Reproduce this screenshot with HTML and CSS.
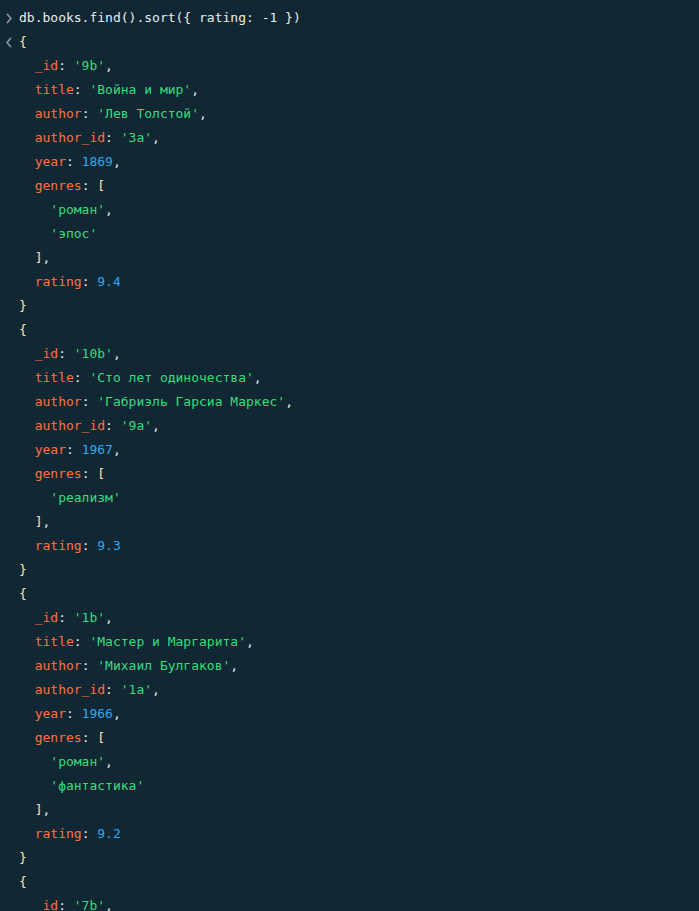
FILE: index.html
```html
<!DOCTYPE html>
<html lang="ru">
<head>
<meta charset="utf-8">
<title>mongosh</title>
<link rel="stylesheet" href="styles.css">
</head>
<body>
<div class="shell">
  <div class="entry">
    <div class="gutter"><svg class="chev" width="12" height="24" viewBox="0 0 12 24"><polyline points="7.5,8.5 11,12.5 7.5,16.5" fill="none" stroke="#889397" stroke-width="1.8" stroke-linecap="round" stroke-linejoin="round"/></svg></div>
    <div class="code"><span class="line">db.books.find().sort({ rating: -1 })</span></div>
  </div>
  <div class="entry">
    <div class="gutter"><svg class="chev" width="12" height="24" viewBox="0 0 12 24"><polyline points="10.5,8.5 7,12.5 10.5,16.5" fill="none" stroke="#889397" stroke-width="1.8" stroke-linecap="round" stroke-linejoin="round"/></svg></div>
    <div class="code">
<span class="line"><span class="p">{</span></span>
<span class="line">  <span class="k">_id</span>: <span class="s">'9b'</span>,</span>
<span class="line">  <span class="k">title</span>: <span class="s">'Война и мир'</span>,</span>
<span class="line">  <span class="k">author</span>: <span class="s">'Лев Толстой'</span>,</span>
<span class="line">  <span class="k">author_id</span>: <span class="s">'3a'</span>,</span>
<span class="line">  <span class="k">year</span>: <span class="n">1869</span>,</span>
<span class="line">  <span class="k">genres</span>: <span class="p">[</span></span>
<span class="line">    <span class="s">'роман'</span>,</span>
<span class="line">    <span class="s">'эпос'</span></span>
<span class="line">  <span class="p">]</span>,</span>
<span class="line">  <span class="k">rating</span>: <span class="n">9.4</span></span>
<span class="line"><span class="p">}</span></span>
<span class="line"><span class="p">{</span></span>
<span class="line">  <span class="k">_id</span>: <span class="s">'10b'</span>,</span>
<span class="line">  <span class="k">title</span>: <span class="s">'Сто лет одиночества'</span>,</span>
<span class="line">  <span class="k">author</span>: <span class="s">'Габриэль Гарсиа Маркес'</span>,</span>
<span class="line">  <span class="k">author_id</span>: <span class="s">'9a'</span>,</span>
<span class="line">  <span class="k">year</span>: <span class="n">1967</span>,</span>
<span class="line">  <span class="k">genres</span>: <span class="p">[</span></span>
<span class="line">    <span class="s">'реализм'</span></span>
<span class="line">  <span class="p">]</span>,</span>
<span class="line">  <span class="k">rating</span>: <span class="n">9.3</span></span>
<span class="line"><span class="p">}</span></span>
<span class="line"><span class="p">{</span></span>
<span class="line">  <span class="k">_id</span>: <span class="s">'1b'</span>,</span>
<span class="line">  <span class="k">title</span>: <span class="s">'Мастер и Маргарита'</span>,</span>
<span class="line">  <span class="k">author</span>: <span class="s">'Михаил Булгаков'</span>,</span>
<span class="line">  <span class="k">author_id</span>: <span class="s">'1a'</span>,</span>
<span class="line">  <span class="k">year</span>: <span class="n">1966</span>,</span>
<span class="line">  <span class="k">genres</span>: <span class="p">[</span></span>
<span class="line">    <span class="s">'роман'</span>,</span>
<span class="line">    <span class="s">'фантастика'</span></span>
<span class="line">  <span class="p">]</span>,</span>
<span class="line">  <span class="k">rating</span>: <span class="n">9.2</span></span>
<span class="line"><span class="p">}</span></span>
<span class="line"><span class="p">{</span></span>
<span class="line">  <span class="k">_id</span>: <span class="s">'7b'</span>,</span>
    </div>
  </div>
</div>
</body>
</html>
```

FILE: styles.css
```css
html, body {
  margin: 0;
  padding: 0;
  background: #112733;
  height: 100%;
  overflow: hidden;
}

.shell {
  padding-top: 6px;
  font-family: "DejaVu Sans Mono", "Liberation Mono", monospace;
  font-size: 13px;
  line-height: 24px;
  color: #E8EDEB;
}

.entry {
  display: flex;
  align-items: flex-start;
}

.gutter {
  width: 19px;
  flex: none;
  height: 24px;
}

.chev {
  display: block;
}

.code {
  white-space: pre;
  display: flex;
  flex-direction: column;
}

.code > .line {
  display: block;
  height: 24px;
}

.k { color: #FF6F44; }
.s { color: #35DE7B; }
.n { color: #2DA8F2; }
.p { color: #F5E6B8; }
```
